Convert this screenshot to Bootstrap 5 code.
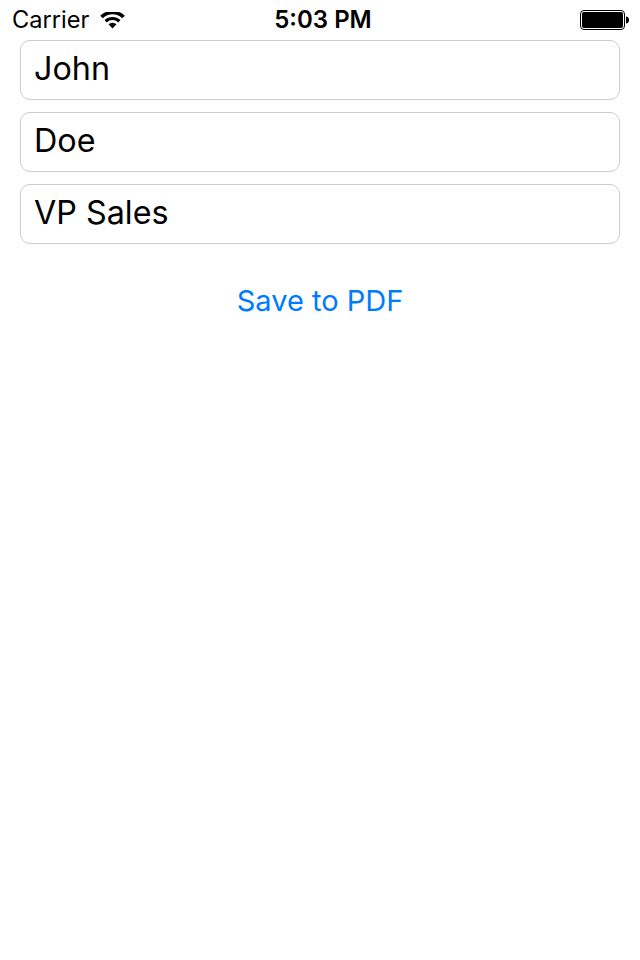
<!doctype html>
<html lang="en"><head><meta charset="utf-8">
<link href="https://cdn.jsdelivr.net/npm/bootstrap@5.3.0/dist/css/bootstrap.min.css" rel="stylesheet">
<style>
body{font-family:Inter,"Liberation Sans",sans-serif;background:#fff;color:#000}
.status-strip{height:40px;padding:0 11px 0 12px;font-size:23.6px;line-height:40px}
.status-left{width:200px;gap:11px}
.status-time{font-weight:600;font-size:24px;padding-left:5px}
.status-right{width:200px}
.batt{width:49px;height:20px}
.wifi{width:25px;height:17px}
.form-wrap{padding:0 20px;gap:12px}
.field{height:60px;border:1px solid #ccc;border-radius:10px;padding:0 14px 3px 13px;font-size:32.300px;color:#000;box-shadow:none}
.save-btn{color:#007aff;font-size:29px;line-height:36px;padding:0;border:0;margin-top:39px}
</style></head><body>
<div class="status-strip d-flex justify-content-between align-items-center">
<div class="status-left d-flex align-items-center"><span>Carrier</span>
<svg class="wifi" viewBox="0 0 26 18"><path d="M13 17.500 8.800 13a6 6 0 0 1 8.400 0zM6.900 11 4.600 8.600a12 12 0 0 1 16.800 0L19.100 11a8.800 8.800 0 0 0-12.200 0zM2.700 6.600 0 4a18.500 18.500 0 0 1 26 0l-2.700 2.600a15 15 0 0 0-20.600 0z" fill="#000"/></svg></div>
<div class="status-time">5:03 PM</div>
<div class="status-right d-flex justify-content-end align-items-center">
<svg class="batt" viewBox="0 0 49 20"><rect x=".5" y=".5" width="44" height="19" rx="3.500" fill="#fff" stroke="#000"/><rect x="2" y="2" width="41" height="16" rx="2" fill="#000"/><path d="M46 6.500c1.800.2 3 1.300 3 3.500s-1.200 3.300-3 3.500z" fill="#000"/></svg></div>
</div>
<div class="form-wrap d-flex flex-column">
<input class="form-control field" value="John">
<input class="form-control field" value="Doe">
<input class="form-control field" value="VP Sales">
</div>
<div class="text-center"><button class="btn save-btn">Save to PDF</button></div>
</body></html>
